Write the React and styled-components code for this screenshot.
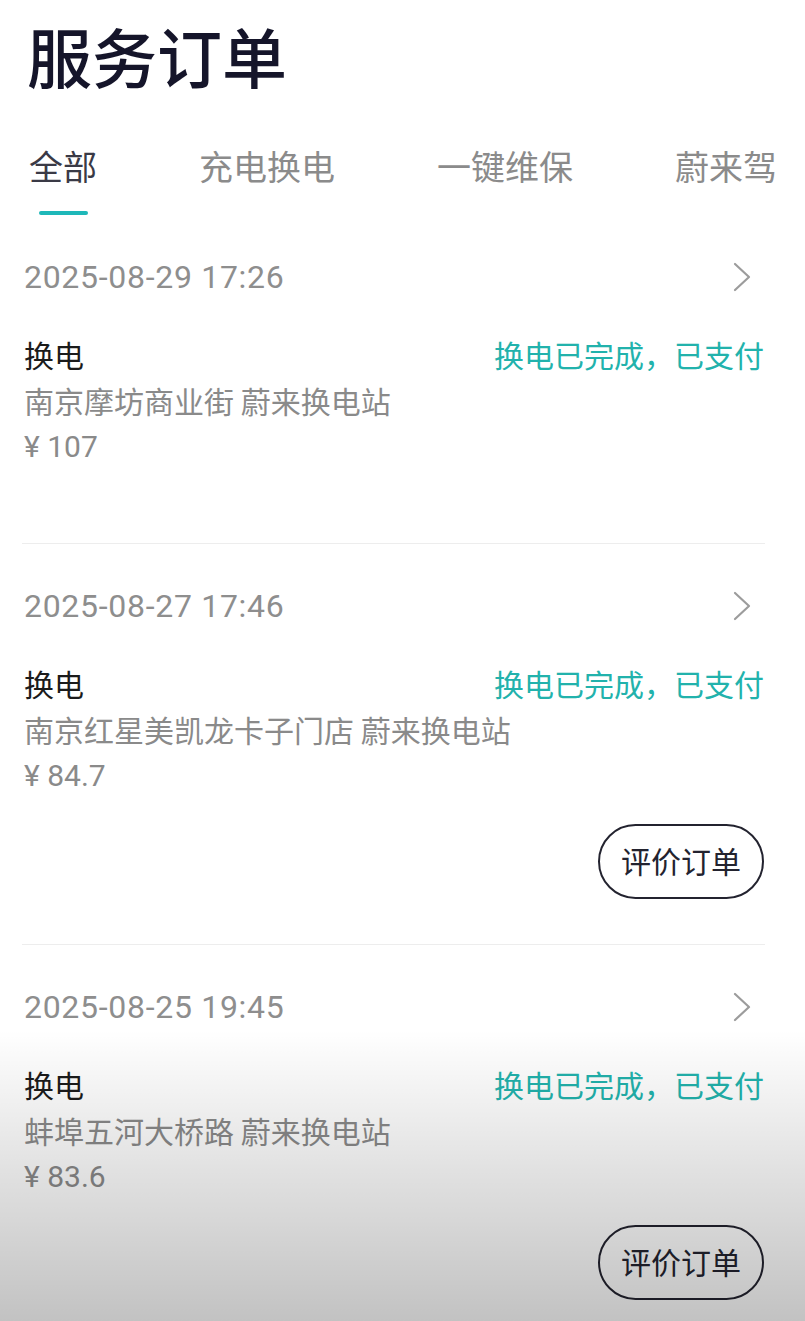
import React from 'react';
import styled, { createGlobalStyle } from 'styled-components';

const GlobalStyle = createGlobalStyle`
  html, body { margin: 0; padding: 0; background: #ffffff; }
  body {
    font-family: Roboto, "Noto Sans CJK SC", sans-serif;
    -webkit-font-smoothing: antialiased;
  }
  * { box-sizing: border-box; }
`;

const CJK = `"Noto Sans CJK SC", "Noto Sans", sans-serif`;
const LATIN = `Roboto, "Noto Sans CJK SC", sans-serif`;

const Page = styled.div`
  position: relative;
  width: 805px;
  height: 1321px;
  overflow: hidden;
  background: #ffffff;
`;

const Title = styled.h1`
  margin: 0;
  padding: 23px 0 0 27px;
  font-family: ${CJK};
  font-size: 65px;
  line-height: 65px;
  font-weight: 500;
  color: #15152a;
`;

const Tabs = styled.nav`
  display: flex;
  gap: 102px;
  padding: 60.5px 0 0 29px;
  white-space: nowrap;
  overflow: hidden;
`;

const Tab = styled.div`
  display: flex;
  flex-direction: column;
  align-items: center;
  flex-shrink: 0;
  font-family: ${CJK};
  font-size: 34px;
  line-height: 34px;
  color: ${(p) => (p.$active ? '#3a3a46' : '#8b8b8b')};

  &::after {
    content: '';
    display: block;
    width: 49px;
    height: 4px;
    margin-top: 28.5px;
    border-radius: 2px;
    background: ${(p) => (p.$active ? '#1eb8b9' : 'transparent')};
  }
`;

const Card = styled.article`
  margin: 0 40px 0 22px;
  padding: 47px 1px ${(p) => (p.$hasAction ? '45px' : '81px')} 2px;
  border-bottom: 1px solid #ededed;
`;

const DateRow = styled.div`
  display: flex;
  align-items: center;
  justify-content: space-between;
  height: 30px;
`;

const DateText = styled.span`
  font-family: ${LATIN};
  font-size: 32px;
  line-height: 30px;
  letter-spacing: 0.7px;
  color: #8e8e8e;
`;

const Chevron = styled.svg`
  width: 18px;
  height: 30px;
  margin-right: 13px;
  flex-shrink: 0;
`;

const MainRow = styled.div`
  display: flex;
  align-items: center;
  justify-content: space-between;
  height: 30px;
  margin-top: 46.5px;
`;

const TypeText = styled.span`
  font-family: ${CJK};
  font-size: 30px;
  line-height: 30px;
  color: #1b1b1b;
`;

const Status = styled.span`
  font-family: ${CJK};
  font-size: 30px;
  line-height: 30px;
  color: #22b2ac;
`;

const Address = styled.div`
  margin-top: 16px;
  font-family: ${CJK};
  font-size: 30px;
  line-height: 30px;
  color: #8a8a8a;
  white-space: nowrap;
`;

const Price = styled.div`
  margin-top: 17.5px;
  font-family: ${LATIN};
  font-size: 30px;
  line-height: 30px;
  color: #8a8a8a;
`;

const Footer = styled.div`
  display: flex;
  justify-content: flex-end;
  margin-top: 33px;
`;

const RateButton = styled.button`
  width: 166px;
  height: 75px;
  padding: 0 0 3px;
  border: 2px solid #23232f;
  border-radius: 38px;
  background: transparent;
  font-family: ${CJK};
  font-size: 30px;
  line-height: 30px;
  color: #23232f;
`;

const BottomShade = styled.div`
  position: absolute;
  left: 0;
  right: 0;
  bottom: 0;
  height: 291px;
  pointer-events: none;
  background: linear-gradient(to bottom, rgba(0, 0, 0, 0) 0%, rgba(0, 0, 0, 0.12) 50%, rgba(0, 0, 0, 0.24) 100%);
`;

const tabs = ['全部', '充电换电', '一键维保', '蔚来驾'];

const orders = [
  { date: '2025-08-29 17:26', type: '换电', status: '换电已完成，已支付', address: '南京摩坊商业街 蔚来换电站', price: '¥ 107', rate: false },
  { date: '2025-08-27 17:46', type: '换电', status: '换电已完成，已支付', address: '南京红星美凯龙卡子门店 蔚来换电站', price: '¥ 84.7', rate: true },
  { date: '2025-08-25 19:45', type: '换电', status: '换电已完成，已支付', address: '蚌埠五河大桥路 蔚来换电站', price: '¥ 83.6', rate: true },
];

const ChevronIcon = () => (
  <Chevron viewBox="0 0 18 30" fill="none">
    <path d="M2 2 L16 15 L2 28" stroke="#9c9c9c" strokeWidth="2.2" strokeLinecap="round" strokeLinejoin="round" />
  </Chevron>
);

export default function App() {
  return (
    <Page>
      <GlobalStyle />
      <Title>服务订单</Title>
      <Tabs>
        {tabs.map((t, i) => (
          <Tab key={t} $active={i === 0}>{t}</Tab>
        ))}
      </Tabs>
      {orders.map((o) => (
        <Card key={o.date} $hasAction={o.rate}>
          <DateRow>
            <DateText>{o.date}</DateText>
            <ChevronIcon />
          </DateRow>
          <MainRow>
            <TypeText>{o.type}</TypeText>
            <Status>{o.status}</Status>
          </MainRow>
          <Address>{o.address}</Address>
          <Price>{o.price}</Price>
          {o.rate && (
            <Footer>
              <RateButton>评价订单</RateButton>
            </Footer>
          )}
        </Card>
      ))}
      <BottomShade />
    </Page>
  );
}
